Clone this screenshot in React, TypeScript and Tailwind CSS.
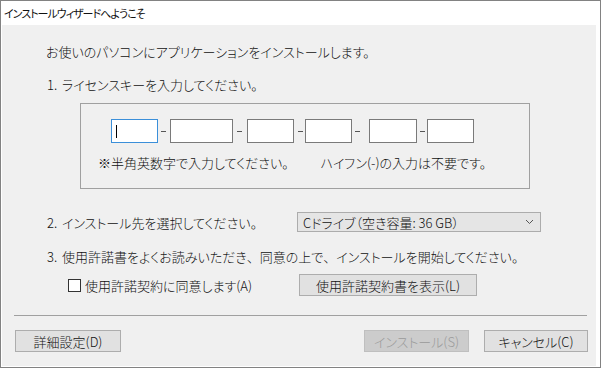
import React from "react";

const font = "font-['Noto_Sans_CJK_JP',sans-serif] [font-feature-settings:'palt'] font-light";

function Btn({ children, w, disabled }: { children: React.ReactNode; w: string; disabled?: boolean }) {
  return (
    <div
      className={`${w} h-[22px] flex items-center justify-center border text-[13px] leading-none ${
        disabled ? "bg-[#cccccc] border-[#bfbfbf] text-[#9a9a9a]" : "bg-[#e1e1e1] border-[#adadad] text-[#111]"
      }`}
    >
      {children}
    </div>
  );
}

function KeyBox({ w, focused }: { w: string; focused?: boolean }) {
  return (
    <div className={`${w} h-[24px] bg-white border ${focused ? "border-[#3b8fd9]" : "border-[#7a7a7a]"} flex items-center pl-[4px]`}>
      {focused && <div className="w-px h-[13px] bg-black" />}
    </div>
  );
}

function Dash({ ml, mr }: { ml: string; mr: string }) {
  return <div className={`${ml} ${mr} w-[5px] h-px bg-[#555] mt-[1px]`} />;
}

const Comma = () => <span className="[font-feature-settings:normal]">、</span>;

function Num({ n }: { n: string }) {
  return <span className="inline-block w-[18px] pl-[3px]">{n}.</span>;
}

export default function App() {
  return (
    <div className={`w-[601px] h-[368px] bg-white border border-[#828282] flex flex-col ${font} text-[#111]`}>
      <div className="h-[24px] flex items-center pl-[3px] text-[11px] tracking-[-1px] leading-none font-normal">インストールウィザードへようこそ</div>
      <div className="flex-1 bg-[#f0f0f0] mr-[4px] ml-px mb-px flex flex-col">
        <div className="pl-[44px] text-[13px] leading-[18px] mt-[18px]">お使いのパソコンにアプリケーションをインストールします。</div>
        <div className="pl-[42px] text-[13px] leading-[18px] mt-[15px]">
          <Num n="1" />ライセンスキーを入力してください。
        </div>
        <div className="ml-[78px] mt-[9px] w-[450px] h-[86px] border border-[#a0a0a0] flex flex-col">
          <div className="flex items-center ml-[30px] mt-[15px]">
            <KeyBox w="w-[47px]" focused />
            <Dash ml="ml-[3px]" mr="mr-[4px]" />
            <KeyBox w="w-[63px]" />
            <Dash ml="ml-[4px]" mr="mr-[5px]" />
            <KeyBox w="w-[47px]" />
            <Dash ml="ml-[4px]" mr="mr-[2px]" />
            <KeyBox w="w-[47px]" />
            <Dash ml="ml-[3px]" mr="mr-[9px]" />
            <KeyBox w="w-[48px]" />
            <Dash ml="ml-[3px]" mr="mr-[2px]" />
            <KeyBox w="w-[47px]" />
          </div>
          <div className="flex text-[13px] leading-[18px] mt-[11px] ml-[17px]">
            <span>※半角英数字で入力してください。</span>
            <span className="ml-[32px]">ハイフン(-)の入力は不要です。</span>
          </div>
        </div>
        <div className="flex items-center mt-[23px] h-[20px]">
          <div className="pl-[42px] w-[295px] text-[13px] leading-none">
            <Num n="2" />インストール先を選択してください。
          </div>
          <div className="w-[244px] h-[20px] bg-[#e5e5e5] border border-[#acacac] flex items-center justify-between pl-[5px] pr-[6px] text-[13px] leading-none">
            <span>Cドライブ（空き容量: 36 GB）</span>
            <svg width="9" height="6" viewBox="0 0 9 6"><path d="M1 1l3.5 3.5L8 1" fill="none" stroke="#555" strokeWidth="1" /></svg>
          </div>
        </div>
        <div className="pl-[42px] text-[13px] leading-[18px] mt-[16px]">
          <Num n="3" />使用許諾書をよくお読みいただき<Comma />同意の上で<Comma />インストールを開始してください。
        </div>
        <div className="flex items-center mt-[8px] h-[22px]">
          <div className="ml-[66px] w-[13px] h-[13px] bg-white border border-[#333]" />
          <div className="ml-[4px] w-[214px] text-[13px] leading-none">使用許諾契約に同意します(A)</div>
          <Btn w="w-[178px]">使用許諾契約書を表示(L)</Btn>
        </div>
        <div className="ml-[12px] w-[573px] h-px bg-[#a0a0a0] mt-[19px]" />
        <div className="flex items-center mt-[14px] pl-[13px]">
          <Btn w="w-[106px]">詳細設定(D)</Btn>
          <div className="ml-[243px]">
            <Btn w="w-[105px]" disabled>インストール(S)</Btn>
          </div>
          <div className="ml-[15px]">
            <Btn w="w-[104px]">キャンセル(C)</Btn>
          </div>
        </div>
      </div>
    </div>
  );
}
